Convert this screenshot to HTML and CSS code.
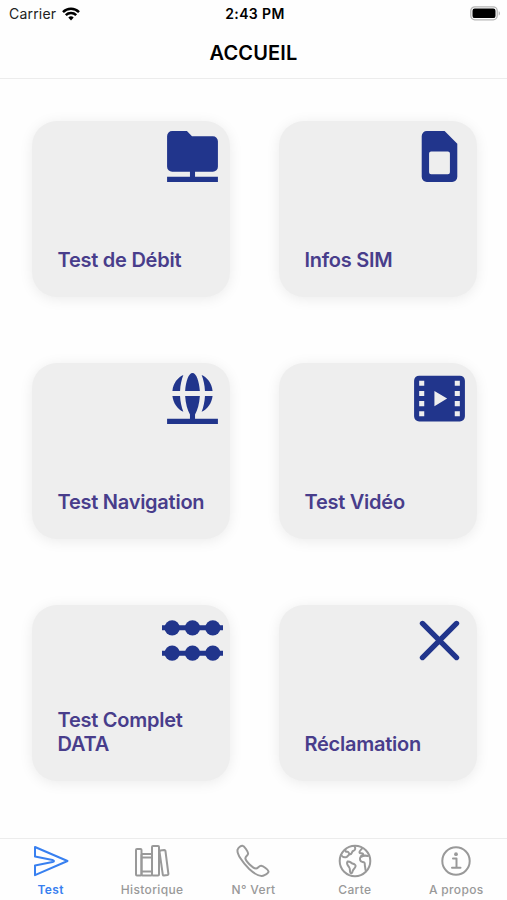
FILE: index.html
```html
<!DOCTYPE html>
<html lang="fr">
<head>
    <meta charset="UTF-8">
    <meta name="viewport" content="width=device-width, initial-scale=1.0">
    <title>Accueil</title>
    <link rel="stylesheet" href="styles.css">
</head>
<body>
    <div class="status-bar">
        <div class="carrier">
            <span>Carrier</span>
            <svg class="wifi" viewBox="0 0 18 14">
                <path d="M9 13.5 6.3 10.6a4 4 0 0 1 5.4 0z" fill="#000"/>
                <path d="M3.8 8.1a7.4 7.4 0 0 1 10.4 0M1 5.1a11.4 11.4 0 0 1 16 0" fill="none" stroke="#000" stroke-width="2.5"/>
            </svg>
        </div>
        <div class="time">2:43 PM</div>
        <div class="battery">
            <svg viewBox="0 0 31 15">
                <rect x="0.8" y="0.8" width="26.4" height="13" rx="4" fill="#fff" stroke="#b5b5b5" stroke-width="1.3"/>
                <rect x="2.5" y="2.5" width="23" height="9.6" rx="2.2" fill="#000"/>
                <path d="M28.7 5.2c1.7.5 1.7 3.7 0 4.2z" fill="#b5b5b5"/>
            </svg>
        </div>
    </div>

    <header class="header">
        <h1>ACCUEIL</h1>
    </header>

    <main class="grid">
        <div class="card">
            <svg class="card-icon" viewBox="0 0 24 24">
                <path d="M4 2h5.8l2 2H20a2 2 0 0 1 2 2v10a2 2 0 0 1-2 2h-7v2h9v2H2v-2h9v-2H4a2 2 0 0 1-2-2V4a2 2 0 0 1 2-2z"/>
            </svg>
            <p>Test de Débit</p>
        </div>
        <div class="card">
            <svg class="card-icon" viewBox="0 0 24 24">
                <path fill-rule="evenodd" d="M7 2h7l5 5v13a2 2 0 0 1-2 2H7a2 2 0 0 1-2-2V4a2 2 0 0 1 2-2zM8.7 10a.8.8 0 0 0-.8.8v7.4a.8.8 0 0 0 .8.8h6.6a.8.8 0 0 0 .8-.8v-7.4a.8.8 0 0 0-.8-.8z"/>
            </svg>
            <p>Infos SIM</p>
        </div>
        <div class="card">
            <svg class="card-icon" viewBox="0 0 24 24">
                <path d="M9.1 9c.3-3.8 1.4-7 2.9-7s2.6 3.2 2.9 7zM7.1 9H4.1c.3-2.9 2-5.2 4.3-6.2C7.7 4.6 7.2 6.7 7.1 9zM16.9 9h3c-.3-2.9-2-5.2-4.3-6.2.7 1.8 1.2 3.9 1.3 6.2zM7.1 11H4.1c.3 2.8 2 5.2 4.3 6.2-.7-1.8-1.2-4-1.3-6.2zM16.9 11h3c-.3 2.8-2 5.2-4.3 6.2.7-1.8 1.2-4 1.3-6.2zM9.1 11h5.8c-.2 3-.9 5.500-1.9 7.300V20h9v2H2v-2h9v-1.700c-1-1.800-1.700-4.300-1.900-7.300z"/>
            </svg>
            <p>Test Navigation</p>
        </div>
        <div class="card">
            <svg class="card-icon" viewBox="0 0 24 24">
                <path fill-rule="evenodd" d="M4 3h16a2 2 0 0 1 2 2v14a2 2 0 0 1-2 2H4a2 2 0 0 1-2-2V5a2 2 0 0 1 2-2zM4 5v2h2V5zM4 9v2h2V9zM4 13v2h2v-2zM4 17v2h2v-2zM18 5v2h2V5zM18 9v2h2V9zM18 13v2h2v-2zM18 17v2h2v-2zM10 9v6l5-3z"/>
            </svg>
            <p>Test Vidéo</p>
        </div>
        <div class="card">
            <svg class="card-icon" viewBox="0 0 24 24">
                <path d="M0 6h24v2H0zM0 16h24v2H0z"/>
                <circle cx="4" cy="7" r="3"/>
                <circle cx="12" cy="7" r="3"/>
                <circle cx="20" cy="7" r="3"/>
                <circle cx="4" cy="17" r="3"/>
                <circle cx="12" cy="17" r="3"/>
                <circle cx="20" cy="17" r="3"/>
            </svg>
            <p>Test Complet DATA</p>
        </div>
        <div class="card">
            <svg class="card-icon" viewBox="0 0 24 24">
                <path class="cross" d="M5.3 5.3l13.4 13.4M18.7 5.3L5.3 18.7"/>
            </svg>
            <p>Réclamation</p>
        </div>
    </main>

    <nav class="tab-bar">
        <a class="tab active">
            <svg viewBox="0 0 36 36">
                <path d="M2 4v9.5l17.5 3.4q3 1.1 0 2.2L2 22.5v9.700L34.500 18z"/>
            </svg>
            <span>Test</span>
        </a>
        <a class="tab">
            <svg viewBox="0 0 36 36">
                <rect x="2" y="6" width="5.5" height="26.5" rx="1"/>
                <rect x="7.5" y="11" width="10.5" height="21.5" rx="1"/>
                <rect x="18" y="3" width="7" height="29.5" rx="1"/>
                <path d="M26.2 7.5l4.2-.6q.8 0 1 .8l3 23.3q0 .8-.8 1l-3.800.5q-.8 0-1-.8l-3.300-23q0-1 .7-1.200zM8 14.500h9.500M8 28.500h9.500"/>
            </svg>
            <span>Historique</span>
        </a>
        <a class="tab">
            <svg viewBox="0 0 36 36">
                <path d="M29.5 32.2c-3.3 1.8-8.8-.2-15.3-6.2C7.4 19.3 1.5 10.7 2.6 6.6 3.5 4.4 6 2.6 7.5 2.8c2 .3 5.3 5.7 5.6 7.5.3 2-3 3-2.7 5.2.4 2.7 7.4 9.8 10.5 10 2 .1 3.100-3 5.300-2.700 2 .3 7 3.700 7.300 5.500.2 1.300-2.200 3-4 3.900z"/>
            </svg>
            <span>N° Vert</span>
        </a>
        <a class="tab">
            <svg viewBox="0 0 36 36">
                <circle cx="18" cy="18" r="15.3"/>
                <path d="M8.5 6.5c-.5 2 .5 2.5 2 2.3 1.5-.3 1 2.7 3 2.5 1.5-.2 1-3 3-3.5 1.6-.5 2.6-2.500.8-4.800M4 12c1.500 2 4 2.500 5.500 2 1.500-.6 1.500-2.500 4-3M10.500 18.500c2.500-.5 3.500 1.500 5 2 2 .5 3.500 1.500 3 3-.6 2-2.500 3-3 5-.3 1.500-1.500 2.500-2.200 1-.8-2 .2-3.500-1.300-5.500-1.600-1.900-2.900-3.500-1.500-5.500zM25 5.500c-1 1.500-3 2.500-2.500 4 .5 1.200 2.500.3 3.500 1.300 1 1.200-1.500 1.700-2.300 2.700M31 13c-2-.5-5-.5-7 .8-2 1.500-1 5 1.500 5.200 2 .2 2.500.5 2.300 2.500 0 1.500.5 3 .7 5.500"/>
            </svg>
            <span>Carte</span>
        </a>
        <a class="tab">
            <svg viewBox="0 0 36 36">
                <circle cx="18" cy="18" r="13.7"/>
                <path d="M15 15.5h3.5v9M14 24.7h8.500"/>
                <circle class="dot" cx="18" cy="11.2" r="1.9"/>
            </svg>
            <span>A propos</span>
        </a>
    </nav>
</body>
</html>
```

FILE: styles.css
```css
* {
    box-sizing: border-box;
}
body {
    margin: 0;
    height: 900px;
    display: flex;
    flex-direction: column;
    overflow: hidden;
    background-color: #fefefe;
    font-family: Inter, sans-serif;
    color: #000;
}
.status-bar {
    height: 27px;
    padding: 0 6px 0 9px;
    display: grid;
    grid-template-columns: 1fr auto 1fr;
    align-items: center;
    font-size: 14px;
}
.carrier {
    display: flex;
    align-items: center;
    gap: 6px;
    color: #222;
    letter-spacing: 0.2px;
}
.wifi {
    width: 18px;
    height: 14px;
}
.time {
    font-weight: 600;
    letter-spacing: 0.4px;
}
.battery {
    display: flex;
    justify-content: flex-end;
}
.battery svg {
    width: 31px;
    height: 15px;
}
.header {
    height: 52px;
    border-bottom: 1px solid #ececec;
    display: flex;
    align-items: center;
    justify-content: center;
}
h1 {
    margin: 0;
    font-size: 20px;
    font-weight: 600;
    letter-spacing: 0.15px;
}
.grid {
    flex: 1;
    display: grid;
    grid-template-columns: 198px 198px;
    grid-auto-rows: 176px;
    gap: 66px 49px;
    padding: 42px 0 0 32px;
}
.card {
    display: flex;
    flex-direction: column;
    justify-content: space-between;
    padding: 4.5px 7px 24.5px 25.5px;
    border-radius: 25px;
    background-color: #eee;
    box-shadow: 0 2px 14px rgba(0, 0, 0, 0.08);
}
.card-icon {
    width: 61px;
    height: 61px;
    align-self: flex-end;
    fill: #21358c;
}
.cross {
    stroke: #21358c;
    stroke-width: 2.1;
    stroke-linecap: round;
}
.card p {
    margin: 0;
    color: #483d8b;
    font-size: 20px;
    font-weight: 600;
    line-height: 24.5px;
    letter-spacing: -0.25px;
}
.tab-bar {
    height: 62px;
    display: grid;
    grid-template-columns: repeat(5, 1fr);
    border-top: 1px solid #ececec;
}
.tab {
    display: flex;
    flex-direction: column;
    align-items: center;
    padding-top: 4px;
    color: #999;
    font-size: 12px;
    font-weight: 500;
    line-height: 21px;
    letter-spacing: 0.35px;
}
.tab svg {
    width: 36px;
    height: 36px;
    fill: none;
    stroke: currentColor;
    stroke-width: 2;
    stroke-linejoin: round;
    stroke-linecap: round;
}
.tab .dot {
    fill: currentColor;
    stroke: none;
}
.active {
    color: #3880f0;
}
.active span {
    font-weight: 600;
}
```
